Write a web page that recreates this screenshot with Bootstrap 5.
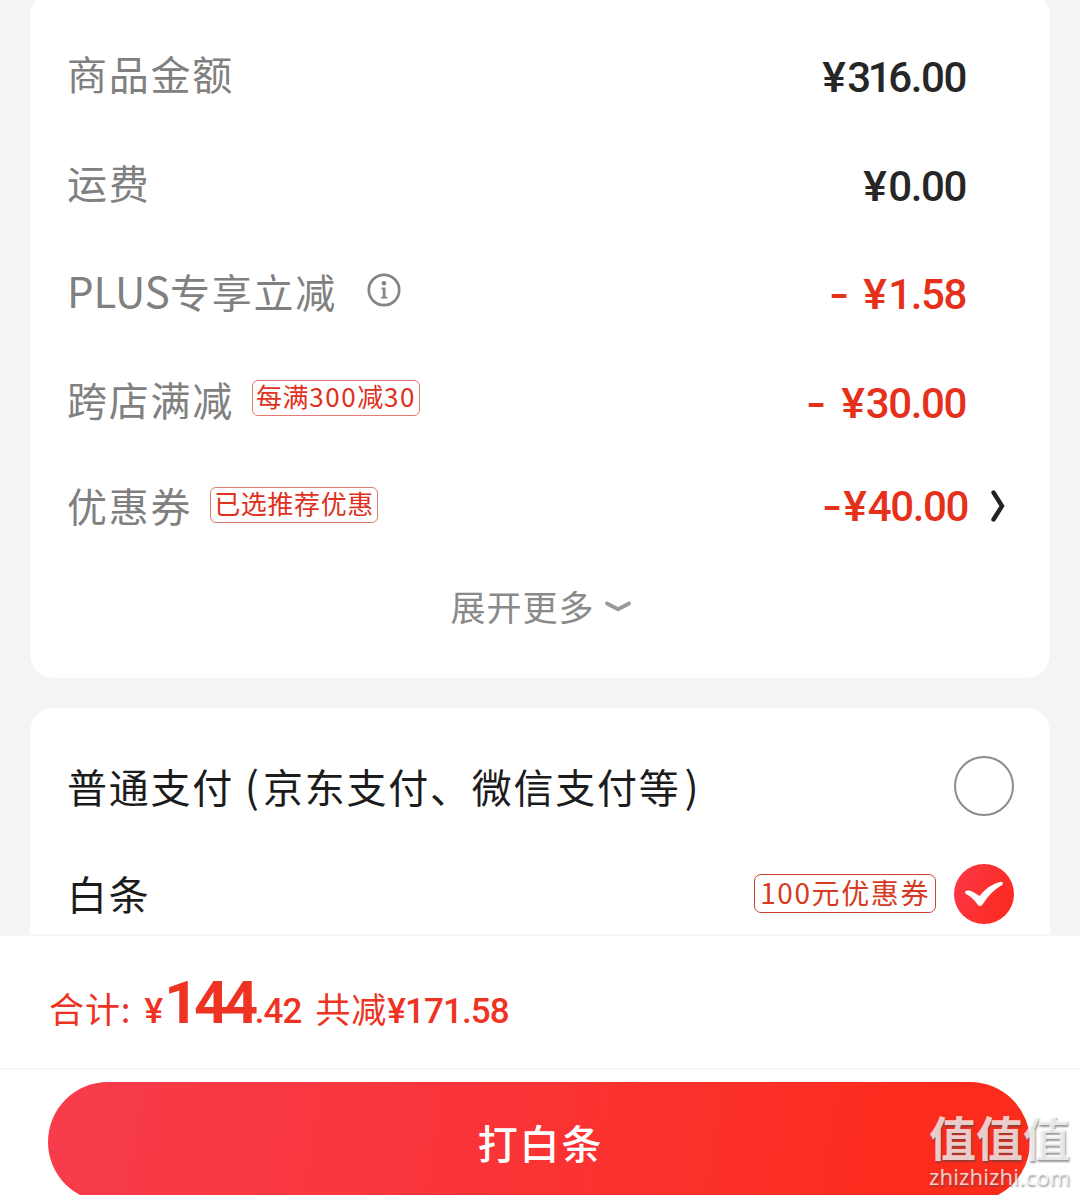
<!DOCTYPE html>
<html lang="zh-CN">
<head>
<meta charset="utf-8">
<meta name="viewport" content="width=device-width, initial-scale=1">
<title>确认订单</title>
<link href="https://cdn.jsdelivr.net/npm/bootstrap@5.3.0/dist/css/bootstrap.min.css" rel="stylesheet">
<style>
body{background:#f4f4f4;font-family:"Noto Sans CJK SC",sans-serif;color:#1c1c1c;letter-spacing:1.75px}
.screen{width:1080px;height:1195px}
.panel{margin:0 30px;border:0;border-radius:24px;background:#fff}
.panel-sum{margin-top:-8px;height:686px;padding:29px 84px 0 37px}
.panel-pay{margin-top:30px;height:226px;padding:24px 36px 0 37px;border-radius:24px 24px 0 0}
.line{height:108.7px;font-size:40px;line-height:60px}
.line-coupon{height:106px;padding-bottom:5px}
.line-credit{height:107px}
.lab{color:#808080;margin-top:-5px}
.line-coupon .lab{margin-top:-3px}
.latin{font-size:42px;letter-spacing:0}
.info{margin:0 0 0 29px}
.price{font-family:Roboto,sans-serif;font-weight:500;font-size:42px;letter-spacing:-1.4px;color:#262626;white-space:pre;margin-top:5px}
.line-coupon .price{margin-top:1px}
.yen{display:inline-block;transform:scaleX(1.06);margin-right:3px}
.one{margin:0 -2px}
.dash{display:inline-block;transform:scaleX(1.35);transform-origin:100% 50%;margin-right:1px}
.line-coupon .dash{margin-right:4px}
.dash-wide{margin-right:18px}
.red{color:#e5301c}
.tag-sm{font-size:26px;line-height:30px;height:36px;border:1px solid #e07a6e;border-radius:6px;color:#e0301e;padding:0 3px;margin-left:18px;letter-spacing:.6px;margin-top:-1px}
.tag-num{letter-spacing:1.6px}
.line-coupon .tag-sm{margin-top:0}
.tag-lg{font-size:28px;line-height:35px;height:39px;border:1.5px solid #d04434;border-radius:7px;color:#d63a22;padding:0 5px;margin:-1px 18px 0 0;letter-spacing:1.6px}
.arrow{margin:-1px -41px 0 22px}
.more{color:#8a8a8a;font-size:35px;letter-spacing:1px;height:89px;margin-right:-49px}
.chev{margin:1px 0 0 9px}
.pay-lab{margin-top:-2px}
.line-credit .pay-lab{margin-top:-2px}
.footer-bar{height:261px;background:#fff;border-top:2px solid #f6f6f6}
.total{height:134px;border-bottom:2px solid #f5f5f5;padding:0 49px;color:#ee3322}
.total .row-in{padding-top:32px;line-height:70px;font-size:35px;letter-spacing:.9px}
.num{font-family:Roboto,sans-serif;font-weight:500;letter-spacing:-.9px}
.num-yen{margin-left:13px}
.num-big{font-size:60px;font-weight:700;letter-spacing:-4.6px;margin:0 1px 0 2px}
.saved{margin-left:14px}
.pay{width:982px;height:120px;margin:12px 0 0 48px;padding:0 0 0 3px;border:0;border-radius:60px;background:linear-gradient(100deg,#f73c4c 0%,#f9353a 40%,#fc2c1c 88%);color:#fff;font-size:40px;font-weight:500;letter-spacing:1.8px}
.mark-wm{right:6px;bottom:6px;width:145px;color:rgba(255,255,255,.76);text-shadow:1px 2px 2px rgba(70,70,70,.55);letter-spacing:0}
.wm-a{font-size:47px;font-weight:700;line-height:52px;margin-bottom:1px}
.wm-b{font-family:"Noto Sans",sans-serif;font-size:22px;line-height:26px;letter-spacing:.15px}
</style>
<script src="https://cdn.jsdelivr.net/npm/bootstrap@5.3.0/dist/js/bootstrap.bundle.min.js"></script>
</head>
<body>
<main class="screen position-relative overflow-hidden d-flex flex-column">
  <section class="panel panel-sum flex-shrink-0">
    <div class="line d-flex align-items-center justify-content-between"><span class="lab">商品金额</span><span class="price"><span class="yen">¥</span>3<span class="one">1</span>6.00</span></div>
    <div class="line d-flex align-items-center justify-content-between"><span class="lab">运费</span><span class="price"><span class="yen">¥</span>0.00</span></div>
    <div class="line d-flex align-items-center justify-content-between">
      <span class="lab d-flex align-items-center"><span><span class="latin">PLUS</span>专享立减</span>
        <svg class="info" width="36" height="36" viewBox="0 0 36 36"><circle cx="18" cy="18" r="15.2" fill="none" stroke="#858585" stroke-width="2.7"/><circle cx="18" cy="11.3" r="2.3" fill="#858585"/><path d="M15.5 15.6h4v9.2h1.8v1.8h-6.2v-1.8h1.7v-7.4h-1.3z" fill="#858585"/></svg></span>
      <span class="price red"><span class="dash dash-wide">-</span><span class="yen">¥</span>1.58</span>
    </div>
    <div class="line d-flex align-items-center justify-content-between"><span class="lab d-flex align-items-center">跨店满减<span class="tag-sm">每满<span class="tag-num">300</span>减<span class="tag-num">30</span></span></span><span class="price red"><span class="dash dash-wide">-</span><span class="yen">¥</span>30.00</span></div>
    <div class="line line-coupon d-flex align-items-center"><span class="lab d-flex align-items-center me-auto">优惠券<span class="tag-sm">已选推荐优惠</span></span><span class="price red"><span class="dash">-</span><span class="yen">¥</span>40.00</span>
      <svg class="arrow" width="17" height="34" viewBox="0 0 17 34"><path d="M3.5 3.5L12 17 3.5 30.5" fill="none" stroke="#222" stroke-width="4.4" stroke-linecap="round"/></svg></div>
    <div class="more d-flex align-items-center justify-content-center"><span>展开更多</span><svg width="28" height="14" viewBox="0 0 28 14" class="chev"><path d="M3 3.5l11 5.8 11-5.8" fill="none" stroke="#999" stroke-width="3.8" stroke-linecap="round"/></svg></div>
  </section>
  <section class="panel panel-pay flex-shrink-0">
    <div class="line d-flex align-items-center justify-content-between"><span class="pay-lab">普通支付 <span class="latin">(</span><span class="ms-1">京东支付、微信支付等</span><span class="latin ms-1">)</span></span>
      <svg width="60" height="60" viewBox="0 0 60 60"><circle cx="30" cy="30" r="29" fill="none" stroke="#8c8c8c" stroke-width="2"/></svg></div>
    <div class="line line-credit d-flex align-items-center"><span class="me-auto pay-lab">白条</span><span class="tag-lg">100元优惠券</span>
      <svg width="60" height="60" viewBox="0 0 60 60"><defs><linearGradient id="g" x1="0" y1="0" x2="1" y2=".3"><stop stop-color="#fb3848"/><stop offset="1" stop-color="#fc2b22"/></linearGradient></defs><circle cx="30" cy="30" r="30" fill="url(#g)"/><path d="M11.2 27.5Q15 24 25.5 32Q35 20.5 46.5 17.8Q49.5 18 48.5 20.8Q37 27 28.500 40.500Q26 43.500 23.500 40.500Q19 33.500 12 30Q10.500 28.800 11.200 27.500Z" fill="#fff"/></svg></div>
  </section>
  <footer class="footer-bar flex-shrink-0">
    <div class="total"><div class="row-in d-flex align-items-baseline"><span>合计:</span><span class="num num-yen">¥</span><span class="num num-big">144</span><span class="num">.42</span><span class="saved">共减</span><span class="num">¥171.58</span></div></div>
    <button class="pay d-block" type="button">打白条</button>
  </footer>
  <div class="mark-wm position-absolute text-nowrap"><div class="wm-a">值值值</div><div class="wm-b">zhizhizhi.com</div></div>
</main>
</body>
</html>
